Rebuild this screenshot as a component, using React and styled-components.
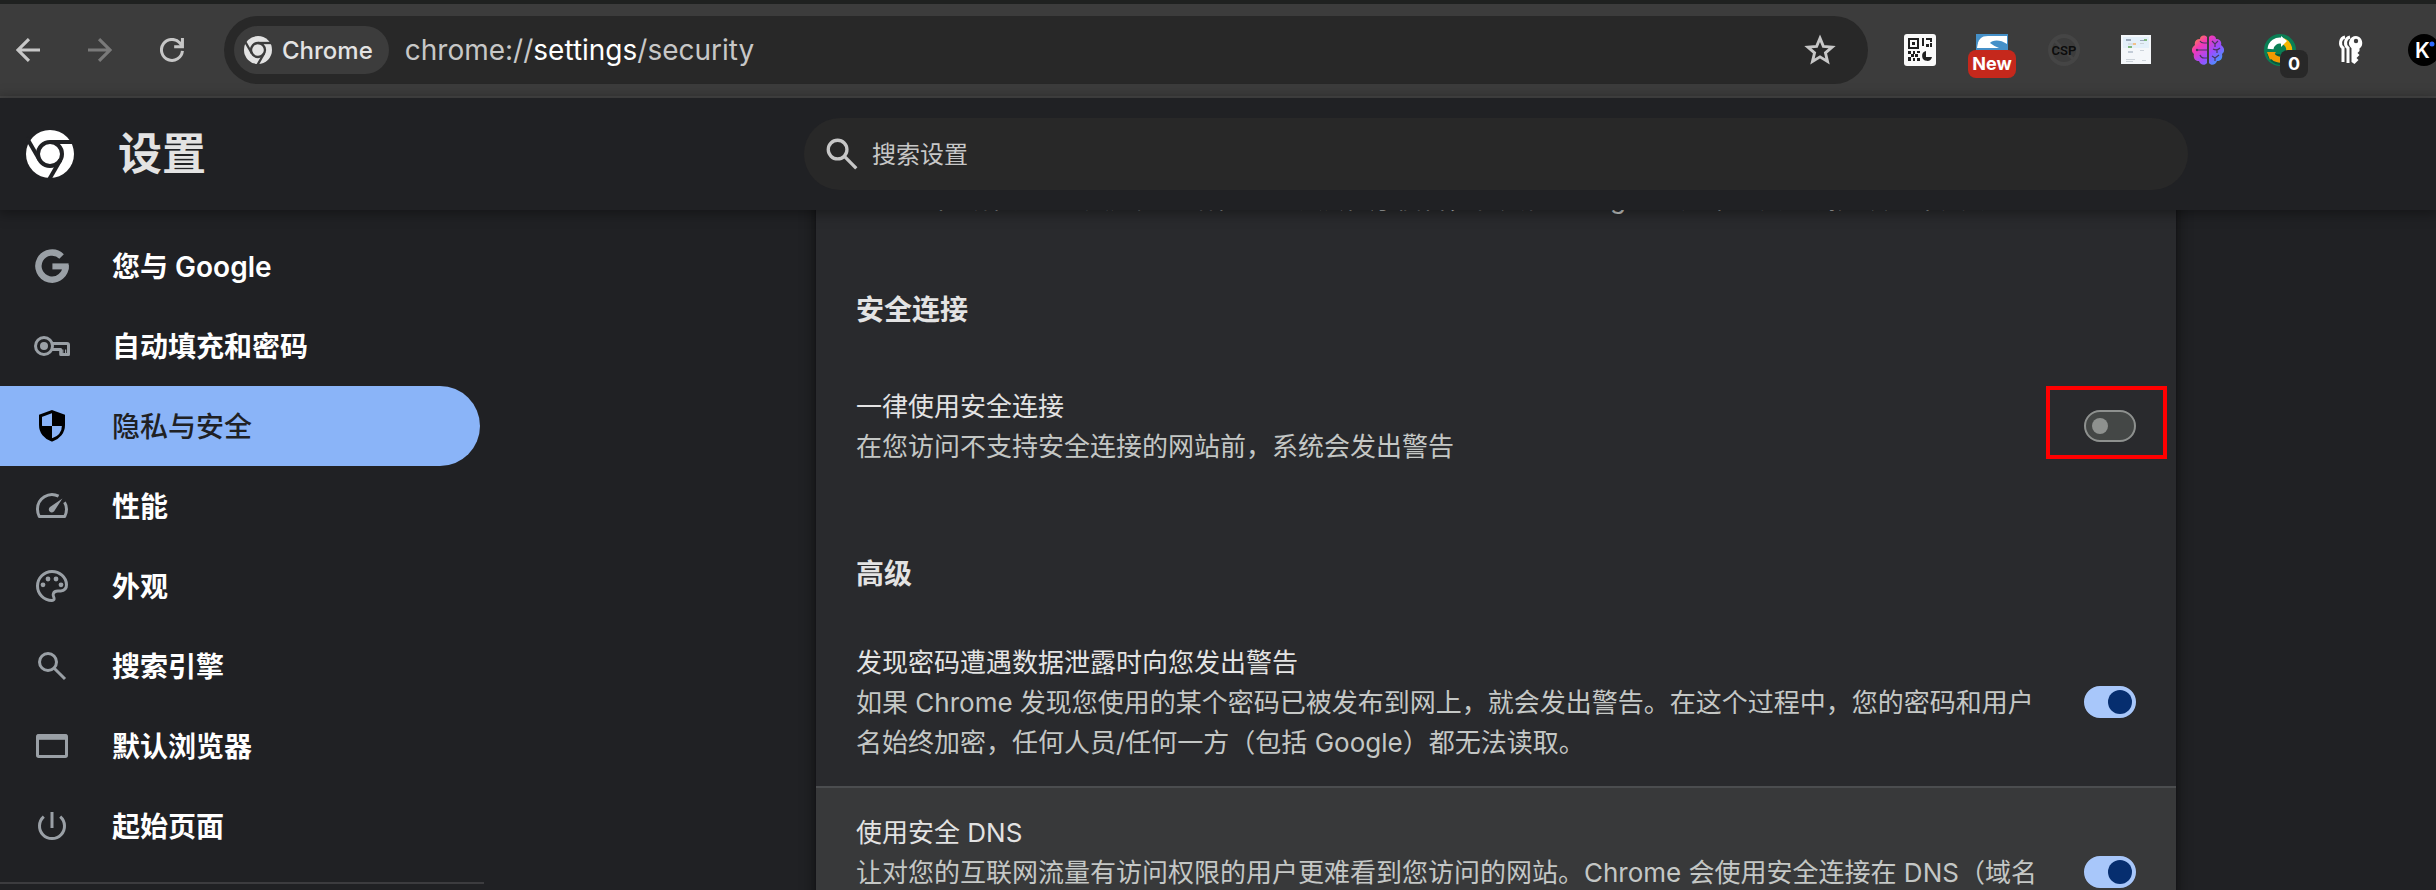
import React from 'react'
import styled, { createGlobalStyle } from 'styled-components'

const GlobalStyle = createGlobalStyle`
  *,
  *::before,
  *::after {
    box-sizing: border-box;
  }

  body {
    margin: 0;
    background: #202124;
    color: #e3e3e3;
    font-family: Inter, 'Noto Sans CJK SC', sans-serif;
  }

  button,
  input {
    font: inherit;
    color: inherit;
  }

  h1,
  h2,
  p,
  ul {
    margin: 0;
    padding: 0;
  }
`

const Window = styled.div`
  display: flex;
  flex-direction: column;
  height: 100vh;
  overflow: hidden;
`

/* browser toolbar */

const Toolbar = styled.div`
  display: flex;
  flex: none;
  align-items: center;
  height: 98px;
  border-top: 4px solid #1f2120;
  border-bottom: 2px solid #474747;
  background: #3c3c3c;
  overflow: hidden;
`

const NavButtons = styled.div`
  display: flex;
  flex: none;
  gap: 32px;
  padding: 0 32px 0 8px;
`

const IconButton = styled.button`
  display: flex;
  align-items: center;
  justify-content: center;
  flex: none;
  width: 40px;
  height: 40px;
  padding: 0;
  border: none;
  background: none;
  color: ${(props) => (props.$dim ? '#7a7a7a' : '#c7c7c7')};
`

const Omnibox = styled.div`
  display: flex;
  align-items: center;
  flex: 1;
  height: 68px;
  padding: 0 28px 0 10px;
  border-radius: 34px;
  background: #282828;
`

const Chip = styled.button`
  display: flex;
  align-items: center;
  gap: 10px;
  height: 48px;
  margin-right: 16px;
  padding: 0 16px 0 10px;
  border: none;
  border-radius: 24px;
  background: #3c3c3c;
  font-size: 24px;
  font-weight: 500;
`

const Address = styled.div`
  flex: 1;
  font-size: 28px;
  color: #c7c7c7;
  outline: none;

  b {
    font-weight: 400;
    color: #fff;
  }
`

const Extensions = styled.div`
  display: flex;
  flex: none;
  gap: 40px;
  width: 568px;
  padding-left: 36px;
  overflow: hidden;
`

const Extension = styled.button`
  position: relative;
  display: flex;
  flex: none;
  align-items: center;
  justify-content: center;
  width: 32px;
  height: 60px;
  padding: 0;
  border: none;
  background: none;
`

const Badge = styled.span`
  position: absolute;
  top: 30px;
  left: ${(props) => (props.$count ? '16px' : '-8px')};
  width: ${(props) => (props.$count ? '28px' : '48px')};
  height: 28px;
  border-radius: 8px;
  background: ${(props) => (props.$count ? '#282828' : '#c5281c')};
  color: #fff;
  font-size: 18px;
  font-weight: 700;
  line-height: 28px;
  text-align: center;
`

/* settings header */

const Header = styled.header`
  position: relative;
  z-index: 1;
  display: grid;
  grid-template-columns: 556px 1fr;
  align-items: center;
  flex: none;
  height: 112px;
  background: #202124;
  box-shadow: 0 2px 12px 2px rgba(0, 0, 0, 0.35);
`

const Brand = styled.div`
  display: flex;
  align-items: center;
  gap: 44px;
  padding-left: 26px;

  h1 {
    font-size: 44px;
    font-weight: 600;
    line-height: 56px;
  }
`

const SearchBox = styled.label`
  display: flex;
  align-items: center;
  justify-self: center;
  gap: 8px;
  width: 100%;
  max-width: 1384px;
  height: 72px;
  padding: 0 16px;
  border-radius: 36px;
  background: #282828;
  color: #c7c7c7;

  input {
    flex: 1;
    padding: 0;
    border: none;
    outline: none;
    background: none;
    font-size: 24px;
  }

  input::placeholder {
    color: #c7c7c7;
    opacity: 1;
  }
`

const Body = styled.div`
  display: grid;
  grid-template-columns: 556px 1fr;
  flex: 1;
  min-height: 0;
`

/* left menu */

const Menu = styled.nav`
  width: 484px;
  padding-top: 16px;

  ul {
    padding-bottom: 16px;
    border-bottom: 2px solid #3c3c3f;
    list-style: none;
  }
`

const MenuLink = styled.a`
  display: flex;
  align-items: center;
  gap: 40px;
  height: 80px;
  margin-right: 4px;
  padding-left: 32px;
  border-radius: 0 40px 40px 0;
  background: ${(props) => (props.$selected ? '#8ab4f8' : 'none')};
  color: ${(props) => (props.$selected ? '#202124' : '#fff')};
  font-size: 28px;
  font-weight: ${(props) => (props.$selected ? 500 : 600)};
  text-decoration: none;

  svg {
    flex: none;
    color: ${(props) => (props.$selected ? '#000' : '#9aa0a6')};
  }

  span {
    padding-bottom: 2px;
  }
`

/* content */

const Main = styled.main`
  display: flex;
  justify-content: center;
  align-items: flex-start;
  min-width: 0;
  overflow: hidden;
`

/* the page is scrolled a little, so the first option is tucked under the header */
const Card = styled.div`
  width: 100%;
  max-width: 1360px;
  margin-top: -32px;
  background: #292a2d;
  box-shadow: 0 2px 4px rgba(0, 0, 0, 0.3), 0 4px 12px 4px rgba(0, 0, 0, 0.3);
`

const OptionNote = styled.p`
  padding: 1px 112px 15px;
  color: #c4c7c5;
  font-size: 26px;
  line-height: 40px;
  white-space: nowrap;
`

const SectionTitle = styled.h2`
  padding: 56px 40px 24px;
  font-size: 28px;
  font-weight: 600;
  line-height: 40px;
`

const Row = styled.div`
  display: flex;
  align-items: center;
  gap: 40px;
  min-height: 144px;
  padding: 23px 40px;
  ${(props) => props.$divided && 'border-top: 2px solid #4b4d4f;'}
  background: ${(props) => (props.$hovered ? '#38393a' : 'none')};
`

const RowText = styled.label`
  flex: 1;
  min-width: 0;
  padding-top: 2px;
  font-size: 26px;
  line-height: 40px;
`

const RowNote = styled.span`
  display: block;
  color: #c4c7c5;
`

const ToggleSlot = styled.span`
  position: relative;
  display: flex;
  flex: none;
`

const Highlight = styled.span`
  position: absolute;
  top: -24px;
  right: -31px;
  bottom: -17px;
  left: -38px;
  border: 4px solid #f00;
  pointer-events: none;
`

const Toggle = styled.input`
  display: flex;
  align-items: center;
  appearance: none;
  width: 52px;
  height: 32px;
  margin: 0;
  padding: 0 6px;
  border: 2px solid #8e918f;
  border-radius: 16px;
  background: #444746;

  &::before {
    content: '';
    width: 16px;
    height: 16px;
    border-radius: 50%;
    background: #8e918f;
  }

  &:checked {
    justify-content: flex-end;
    padding: 0 2px;
    border-color: #a8c7fa;
    background: #a8c7fa;
  }

  &:checked::before {
    width: 24px;
    height: 24px;
    background: #062e6f;
  }
`

/* icons */

const ChromeLogo = ({ size, color, gap }) => (
  <svg width={size} height={size} viewBox="-24 -24 48 48" aria-hidden="true">
    <circle r="24" fill={color} />
    <g fill="none" stroke={gap} strokeWidth="4">
      <circle r="12" />
      <path d="M0-12H26" />
      <path d="M0-12H26" transform="rotate(120)" />
      <path d="M0-12H26" transform="rotate(240)" />
    </g>
  </svg>
)

const LineIcon = ({ size = 40, stroke = 1.5, children }) => (
  <svg
    width={size}
    height={size}
    viewBox="0 0 20 20"
    fill="none"
    stroke="currentColor"
    strokeWidth={stroke}
    aria-hidden="true"
  >
    {children}
  </svg>
)

const BackIcon = () => (
  <LineIcon size={24} stroke={2.6}>
    <path d="M20 10H2M10.8.9 1.7 10l9.1 9.1" />
  </LineIcon>
)

const ForwardIcon = () => (
  <LineIcon size={24} stroke={2.6}>
    <path d="M0 10h18M9.2.9l9.1 9.1-9.1 9.1" />
  </LineIcon>
)

const ReloadIcon = () => (
  <LineIcon size={24} stroke={2.5}>
    <path d="M18.7 10.8A8.75 8.75 0 1 1 16.6 4.2L18.6 6.8" />
    <path d="M18.7 0v7.2H11.8" />
  </LineIcon>
)

const StarIcon = () => (
  <LineIcon size={32} stroke={1.8}>
    <path d="M10 2.6l2.1 5.1 5.5.5-4.2 3.6 1.3 5.4L10 14.3l-4.7 2.9 1.3-5.4-4.2-3.6 5.5-.5z" />
  </LineIcon>
)

const GoogleIcon = () => (
  <LineIcon stroke={3.2}>
    <path d="M14.8 5.2A6.8 6.8 0 1 0 16.8 9.6" />
    <path d="M10.2 10.2h8.1" strokeWidth="3" />
  </LineIcon>
)

const SearchIcon = ({ size }) => (
  <LineIcon size={size}>
    <circle cx="8" cy="8" r="4.25" />
    <path d="M11.1 11.1l5.4 5.4" />
  </LineIcon>
)

const KeyIcon = () => (
  <LineIcon>
    <circle cx="6" cy="10" r="4.25" />
    <circle cx="6" cy="10" r="2" fill="currentColor" stroke="none" />
    <path d="M9.9 8.75h7.6q.75 0 .75.75v4.75h-3.9v-2.5H9.9" strokeLinejoin="round" />
    <path d="M15.4 14v-2.2M16.8 14v-2.2" strokeWidth=".6" />
  </LineIcon>
)

const ShieldIcon = () => (
  <LineIcon>
    <path d="M10 2.8l5.75 2.1v4.6c0 3.6-2.3 6.4-5.75 7.5-3.45-1.1-5.75-3.9-5.75-7.5V4.9z" />
    <path
      d="M10 2.8l5.75 2.1V10H10zM10 10v7c-3.3-1.1-5.5-3.7-5.75-7z"
      fill="currentColor"
      stroke="none"
    />
  </LineIcon>
)

const SpeedIcon = () => (
  <LineIcon>
    <path
      d="M13.3 5.1A7.25 7.25 0 0 0 2.75 11.6c0 1.3.3 2.5.9 3.65h12.7c.6-1.1.9-2.3.9-3.65 0-1.3-.35-2.5-1-3.5"
      strokeLinejoin="round"
    />
    <path
      d="M15.2 6.2l-6.2 4.3a1.5 1.5 0 1 0 2.1 2.1z"
      fill="currentColor"
      stroke="none"
    />
  </LineIcon>
)

const PaletteIcon = () => (
  <LineIcon>
    <path d="M10 2.75a7.25 7.25 0 0 0 0 14.5c.9 0 1.2-.6 1-1.3-.5-1.1-.7-1.5-.3-2.3.4-.9 1.2-1.2 2.2-1.2h1.5c1.9 0 2.9-1.5 2.85-3.1C17.1 5.5 13.7 2.75 10 2.75z" />
    <g fill="currentColor" stroke="none">
      <circle cx="5.5" cy="9.4" r="1.2" />
      <circle cx="8" cy="6.5" r="1.2" />
      <circle cx="12" cy="6.5" r="1.2" />
      <circle cx="14.5" cy="9.4" r="1.2" />
    </g>
  </LineIcon>
)

const BrowserIcon = () => (
  <LineIcon>
    <rect x="2.75" y="4.75" width="14.5" height="10.5" rx=".6" />
    <path d="M2.5 5.6h15" strokeWidth="2.6" />
  </LineIcon>
)

const PowerIcon = () => (
  <LineIcon>
    <path d="M10 3v8M5.9 5.3a6.25 6.25 0 1 0 8.2 0" />
  </LineIcon>
)

const QrIcon = () => (
  <svg width="32" height="32" viewBox="0 0 32 32" aria-hidden="true">
    <rect width="32" height="32" rx="3" fill="#fafafa" />
    <g fill="#1f1f1f">
      <path d="M4 4h11v11H4zM6 6v7h7V6z" fillRule="evenodd" />
      <path d="M8 8h3v3H8zM18 4h2v8h-2zM22 4h6v4h-2V6h-4zM22 10h3v3h-3zM26 9h2v4h-2z" />
      <path d="M4 17h3v3H4zM9 17h2v3H9zM13 17h3v2h-3zM7 20h3v3H7zM11 20h3v3h-3zM4 23h3v4H4zM9 24h2v3H9zM13 24h3v3h-3z" />
      <path d="M22 17a5 5 0 1 0 6 6h-6z" />
    </g>
  </svg>
)

const SIcon = () => (
  <svg width="32" height="32" viewBox="0 0 32 32" aria-hidden="true">
    <rect width="32" height="32" fill="#4590c8" />
    <path d="M31 2H12C5 2 2 5 1 14h14c4 0 12 0 16-1z" fill="#fff" />
    <path d="M14 9c2-3 10-4 17 1v4h-8c-3-1-6-3-9-5z" fill="#4590c8" />
  </svg>
)

const CspIcon = () => (
  <svg width="32" height="32" viewBox="0 0 32 32" aria-hidden="true">
    <circle cx="16" cy="16" r="14" fill="none" stroke="#454545" strokeWidth="4" />
    <path d="M7 7l18 18" stroke="#454545" strokeWidth="3" />
    <text
      x="16"
      y="21"
      textAnchor="middle"
      fill="#0c0c0c"
      fontFamily="Roboto, sans-serif"
      fontSize="13"
      fontWeight="600"
    >
      CSP
    </text>
  </svg>
)

const PageIcon = () => (
  <svg width="32" height="32" viewBox="0 0 32 32" aria-hidden="true">
    <path d="M1 1h30v29H1z" fill="#f4f7fa" />
    <path d="M3 3h26v11H3z" fill="#e4f0fa" />
    <path d="M6 5h5v2H6zM20 6h6v1h-6z" fill="#9aa8ba" />
    <path d="M8 9h6v2H8z" fill="#d9e0e8" />
    <path d="M13 9h3v2h-3z" fill="#f2c28c" />
    <path d="M8 12h4v2H8zM24 5h3v2h-3z" fill="#7fb77e" />
    <path d="M8 17h5v2H8z" fill="#c3ccd7" />
    <path d="M20 9h4v1h-4zM20 16h4v1h-4zM6 25h9v1H6zM6 27h7v1H6zM22 26h4v1h-4z" fill="#ccd3da" />
  </svg>
)

const BrainIcon = () => (
  <svg width="32" height="32" viewBox="0 0 32 32" aria-hidden="true">
    <defs>
      <linearGradient id="brain" x1="0" y1="0" x2="1" y2="1">
        <stop offset="0" stopColor="#ff9f1c" />
        <stop offset=".3" stopColor="#f437b5" />
        <stop offset=".6" stopColor="#9a4dff" />
        <stop offset="1" stopColor="#1fb6ff" />
      </linearGradient>
    </defs>
    <path
      d="M15 3c-3-3-7-1-7 2C4 5 2 8 3 11c-4 3-4 7-1 9-1 4 1 7 5 7 1 4 6 5 8 2zM17 3c3-3 7-1 7 2 4 0 6 3 5 6 4 3 4 7 1 9 1 4-1 7-5 7-1 4-6 5-8 2z"
      fill="url(#brain)"
    />
    <g fill="none" stroke="#4a3560" strokeWidth="1.2">
      <path d="M15 16H6M15 9h-3q-3 0-4-2M15 24h-3q-3 0-4-3" />
      <path d="M20 7l3 3 3-3M23 10v3M21 15q4 2 7-1M25 16v3M20 22l3 2 4-3M23 24v3" />
    </g>
    <circle cx="5" cy="16" r="1.2" fill="#4a3560" />
  </svg>
)

const CycleIcon = () => (
  <svg width="32" height="32" viewBox="0 0 32 32" aria-hidden="true">
    <circle cx="16" cy="16" r="16" fill="#0a7f55" />
    <path d="M3 20a14 14 0 0 0 13 11V20z" fill="#075a3c" />
    <g fill="none" strokeWidth="6">
      <path d="M6.5 15A9.5 9.5 0 0 1 18 6.7" stroke="#fff" />
      <path d="M19 7a9.5 9.5 0 0 1 6 11" stroke="#f7b500" />
      <path d="M22 23.5A9.5 9.5 0 0 1 7 19" stroke="#f29900" />
    </g>
    <path d="M17 2l6 5-6 6z" fill="#fff" />
    <path d="M20 17h10l-5 5z" fill="#f7b500" />
    <path d="M3 18h9l-6 8z" fill="#f29900" />
  </svg>
)

const KeysIcon = () => (
  <svg width="32" height="32" viewBox="0 0 32 32" aria-hidden="true">
    <g fill="none" stroke="#fff" strokeWidth="3">
      <path d="M9 3c-5 1-6 8-2 11v14" />
      <path d="M14 3c-5 1-6 8-2 11v15" />
    </g>
    <path
      d="M20 2a7 7 0 0 0-4.500 12.300V28l3 2 4-4-2-2 3-3-2-2 2-2v-2.500A7 7 0 0 0 20 2z"
      fill="#fff"
    />
    <circle cx="20" cy="7" r="2.2" fill="#3c3c3c" />
  </svg>
)

const KIcon = () => (
  <svg width="32" height="32" viewBox="0 0 32 32" aria-hidden="true">
    <circle cx="16" cy="16" r="16" fill="#000" />
    <text
      x="7"
      y="24"
      fill="#fff"
      fontFamily="Inter, sans-serif"
      fontSize="21"
      fontWeight="600"
    >
      K
    </text>
    <circle cx="24" cy="10" r="2.5" fill="#2f6bff" />
  </svg>
)

const menuItems = [
  { label: '您与 Google', icon: <GoogleIcon /> },
  { label: '自动填充和密码', icon: <KeyIcon /> },
  { label: '隐私与安全', icon: <ShieldIcon />, selected: true },
  { label: '性能', icon: <SpeedIcon /> },
  { label: '外观', icon: <PaletteIcon /> },
  { label: '搜索引擎', icon: <SearchIcon /> },
  { label: '默认浏览器', icon: <BrowserIcon /> },
  { label: '起始页面', icon: <PowerIcon /> },
]

const ToggleRow = ({ id, title, note, checked, highlighted, ...rest }) => (
  <Row {...rest}>
    <RowText htmlFor={id}>
      {title}
      <RowNote>{note}</RowNote>
    </RowText>
    <ToggleSlot>
      <Toggle id={id} type="checkbox" role="switch" defaultChecked={checked} />
      {highlighted && <Highlight />}
    </ToggleSlot>
  </Row>
)

const BrowserToolbar = () => (
  <Toolbar>
    <NavButtons>
      <IconButton type="button" aria-label="后退">
        <BackIcon />
      </IconButton>
      <IconButton type="button" aria-label="前进" $dim>
        <ForwardIcon />
      </IconButton>
      <IconButton type="button" aria-label="重新加载">
        <ReloadIcon />
      </IconButton>
    </NavButtons>
    <Omnibox>
      <Chip type="button">
        <ChromeLogo size={28} color="#e3e3e3" gap="#3c3c3c" />
        Chrome
      </Chip>
      <Address role="textbox" aria-label="地址" tabIndex={0}>
        chrome://<b>settings</b>/security
      </Address>
      <IconButton type="button" aria-label="收藏">
        <StarIcon />
      </IconButton>
    </Omnibox>
    <Extensions>
      <Extension type="button" aria-label="QR">
        <QrIcon />
      </Extension>
      <Extension type="button">
        <SIcon />
        <Badge>New</Badge>
      </Extension>
      <Extension type="button">
        <CspIcon />
      </Extension>
      <Extension type="button" aria-label="Page">
        <PageIcon />
      </Extension>
      <Extension type="button" aria-label="Brain">
        <BrainIcon />
      </Extension>
      <Extension type="button">
        <CycleIcon />
        <Badge $count>0</Badge>
      </Extension>
      <Extension type="button" aria-label="Keys">
        <KeysIcon />
      </Extension>
      <Extension type="button">
        <KIcon />
      </Extension>
    </Extensions>
  </Toolbar>
)

const App = () => {
  return (
    <Window>
      <GlobalStyle />
      <BrowserToolbar />
      <Header>
        <Brand>
          <ChromeLogo size={48} color="#fff" gap="#202124" />
          <h1>设置</h1>
        </Brand>
        <SearchBox>
          <SearchIcon size={44} />
          <input type="text" placeholder="搜索设置" aria-label="搜索设置" />
        </SearchBox>
      </Header>
      <Body>
        <Menu>
          <ul>
            {menuItems.map((item) => (
              <li key={item.label}>
                <MenuLink href="#" $selected={item.selected}>
                  {item.icon}
                  <span>{item.label}</span>
                </MenuLink>
              </li>
            ))}
          </ul>
        </Menu>
        <Main>
          <Card>
            <OptionNote>
              不会保护您免受危险网站和恶意扩展程序侵害，在其他 Google
              服务中的安全浏览设置不受影响
            </OptionNote>
            <SectionTitle>安全连接</SectionTitle>
            <ToggleRow
              id="https-only"
              title="一律使用安全连接"
              note="在您访问不支持安全连接的网站前，系统会发出警告"
              highlighted
            />
            <SectionTitle>高级</SectionTitle>
            <ToggleRow
              id="leak-detection"
              title="发现密码遭遇数据泄露时向您发出警告"
              note="如果 Chrome 发现您使用的某个密码已被发布到网上，就会发出警告。在这个过程中，您的密码和用户名始终加密，任何人员/任何一方（包括 Google）都无法读取。"
              checked
            />
            <ToggleRow
              id="secure-dns"
              title="使用安全 DNS"
              note="让对您的互联网流量有访问权限的用户更难看到您访问的网站。Chrome 会使用安全连接在 DNS（域名系统）中查找网站的 IP 地址。"
              checked
              $divided
              $hovered
            />
          </Card>
        </Main>
      </Body>
    </Window>
  )
}

export default App
